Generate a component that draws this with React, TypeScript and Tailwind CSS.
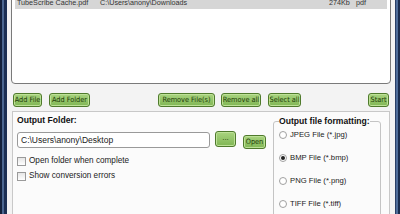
import React, { useState } from 'react';

const font = { fontFamily: '"Liberation Sans", Arial, sans-serif' };
const btnFont = { fontFamily: '"DejaVu Sans Condensed", "DejaVu Sans", sans-serif' };

const GreenButton: React.FC<{ label: string; className?: string }> = ({ label, className = '' }) => (
  <button
    style={btnFont}
    className={`h-[14px] flex items-center justify-center rounded-[3px] border border-[#4f7a2c] bg-gradient-to-b from-[#a9d47f] to-[#80b654] text-[7.3px] leading-[10px] text-[#1e3d08] whitespace-nowrap shadow-[inset_0_0_0_1px_#bde197] ${className}`}
  >
    {label}
  </button>
);

const Checkbox: React.FC<{ label: string }> = ({ label }) => (
  <label className="flex items-center gap-[3px] h-[15px] text-[8.2px] text-[#222] whitespace-nowrap">
    <span className="w-[9px] h-[9px] shrink-0 border border-[#9a9a9a] bg-gradient-to-b from-[#e6e6e6] to-white" />
    {label}
  </label>
);

const Radio: React.FC<{ label: string; checked?: boolean }> = ({ label, checked }) => (
  <div className="flex items-center gap-[3px] h-[23px] text-[7.7px] text-[#222] whitespace-nowrap">
    <span className="w-[8px] h-[8px] shrink-0 rounded-full border border-[#a0a0a0] bg-white flex items-center justify-center">
      {checked && <span className="w-[4px] h-[4px] rounded-full bg-[#222]" />}
    </span>
    {label}
  </div>
);

const App: React.FC = () => {
  const [format] = useState('bmp');

  return (
    <div className="w-[400px] h-[214px] overflow-hidden flex bg-[#f3f3f3]" style={font}>
      {/* left window edge */}
      <div className="w-[7px] shrink-0 flex">
        <div className="w-[2px] bg-[#13203a]" />
        <div className="w-[2px] bg-[#4b6690]" />
        <div className="w-[3px] bg-[#1b2e52]" />
      </div>

      {/* main content */}
      <div className="flex-1 flex flex-col pl-[4px] pr-[4px]">
        {/* file list */}
        <div className="h-[91px] -mt-[7px] shrink-0 border border-[#7a7a7a] rounded-b-[4px] bg-white px-[3px] pt-[1px]">
          <div className="h-[14px] bg-[#d6d6d6] flex items-center pt-[2px] text-[7.2px] text-[#333] whitespace-nowrap">
            <span className="pl-[2px] w-[85px] shrink-0">TubeScribe Cache.pdf</span>
            <span className="flex-1">C:\Users\anony\Downloads</span>
            <span className="w-[27px] shrink-0">274Kb</span>
            <span className="w-[31px] shrink-0">pdf</span>
          </div>
        </div>

        {/* buttons */}
        <div className="flex items-center h-[14px] mt-[9px] pl-[2px] pr-[2px]">
          <GreenButton label="Add File" className="w-[29px]" />
          <GreenButton label="Add Folder" className="ml-[7px] w-[41px]" />
          <GreenButton label="Remove File(s)" className="ml-[68px] w-[57px]" />
          <GreenButton label="Remove all" className="ml-[6px] w-[40px]" />
          <GreenButton label="Select all" className="ml-[7px] w-[33px]" />
          <div className="flex-1" />
          <GreenButton label="Start" className="w-[21px]" />
        </div>

        {/* lower panel */}
        <div className="flex-1 mt-[4px] ml-[1px] mr-[1px] border border-[#c8c8c8] bg-[#fbfbfb] flex pl-[4px]">
          <div className="w-[256px] shrink-0 flex flex-col">
            <div className="mt-[3px] h-[11px] font-bold text-[8.6px] text-[#111] leading-[11px]">Output Folder:</div>
            <div className="flex items-start mt-[6px]">
              <div className="w-[193px] h-[16px] border border-[#9a9a9a] rounded-[3px] bg-white flex items-center pl-[3px] text-[8.5px] text-[#222] whitespace-nowrap">
                C:\Users\anony\Desktop
              </div>
              <button className="ml-[5px] -mt-[1px] w-[21px] h-[16px] rounded-[3px] border border-[#4f7a2c] bg-gradient-to-b from-[#a9d47f] to-[#80b654] text-[8px] text-[#1e3d08] leading-[10px] pb-[3px] shadow-[inset_0_0_0_1px_#bde197]">
                ...
              </button>
              <GreenButton label="Open" className="ml-[7px] mt-[3px] w-[23px] h-[12px]" />
            </div>
            <div className="mt-[5px] flex flex-col">
              <Checkbox label="Open folder when complete" />
              <Checkbox label="Show conversion errors" />
            </div>
          </div>

          <fieldset className="mt-[4px] w-[108px] shrink-0 border border-[#c4c4c4] rounded-[3px] pl-[5px] h-[200px]">
            <legend className="font-bold text-[8.6px] text-[#111] leading-[11px] whitespace-nowrap">
              Output file formatting:
            </legend>
            <div className="-mt-[4px] flex flex-col">
              <Radio label="JPEG File (*.jpg)" checked={format === 'jpg'} />
              <Radio label="BMP File (*.bmp)" checked={format === 'bmp'} />
              <Radio label="PNG File (*.png)" checked={format === 'png'} />
              <Radio label="TIFF File (*.tiff)" checked={format === 'tiff'} />
            </div>
          </fieldset>
        </div>
      </div>

      {/* right window edge */}
      <div className="w-[5px] shrink-0 flex">
        <div className="w-[1px] bg-[#2a3f66]" />
        <div className="w-[2px] bg-[#4f6d9a]" />
        <div className="w-[2px] bg-[#1a2c4e]" />
      </div>
    </div>
  );
};

export default App;
